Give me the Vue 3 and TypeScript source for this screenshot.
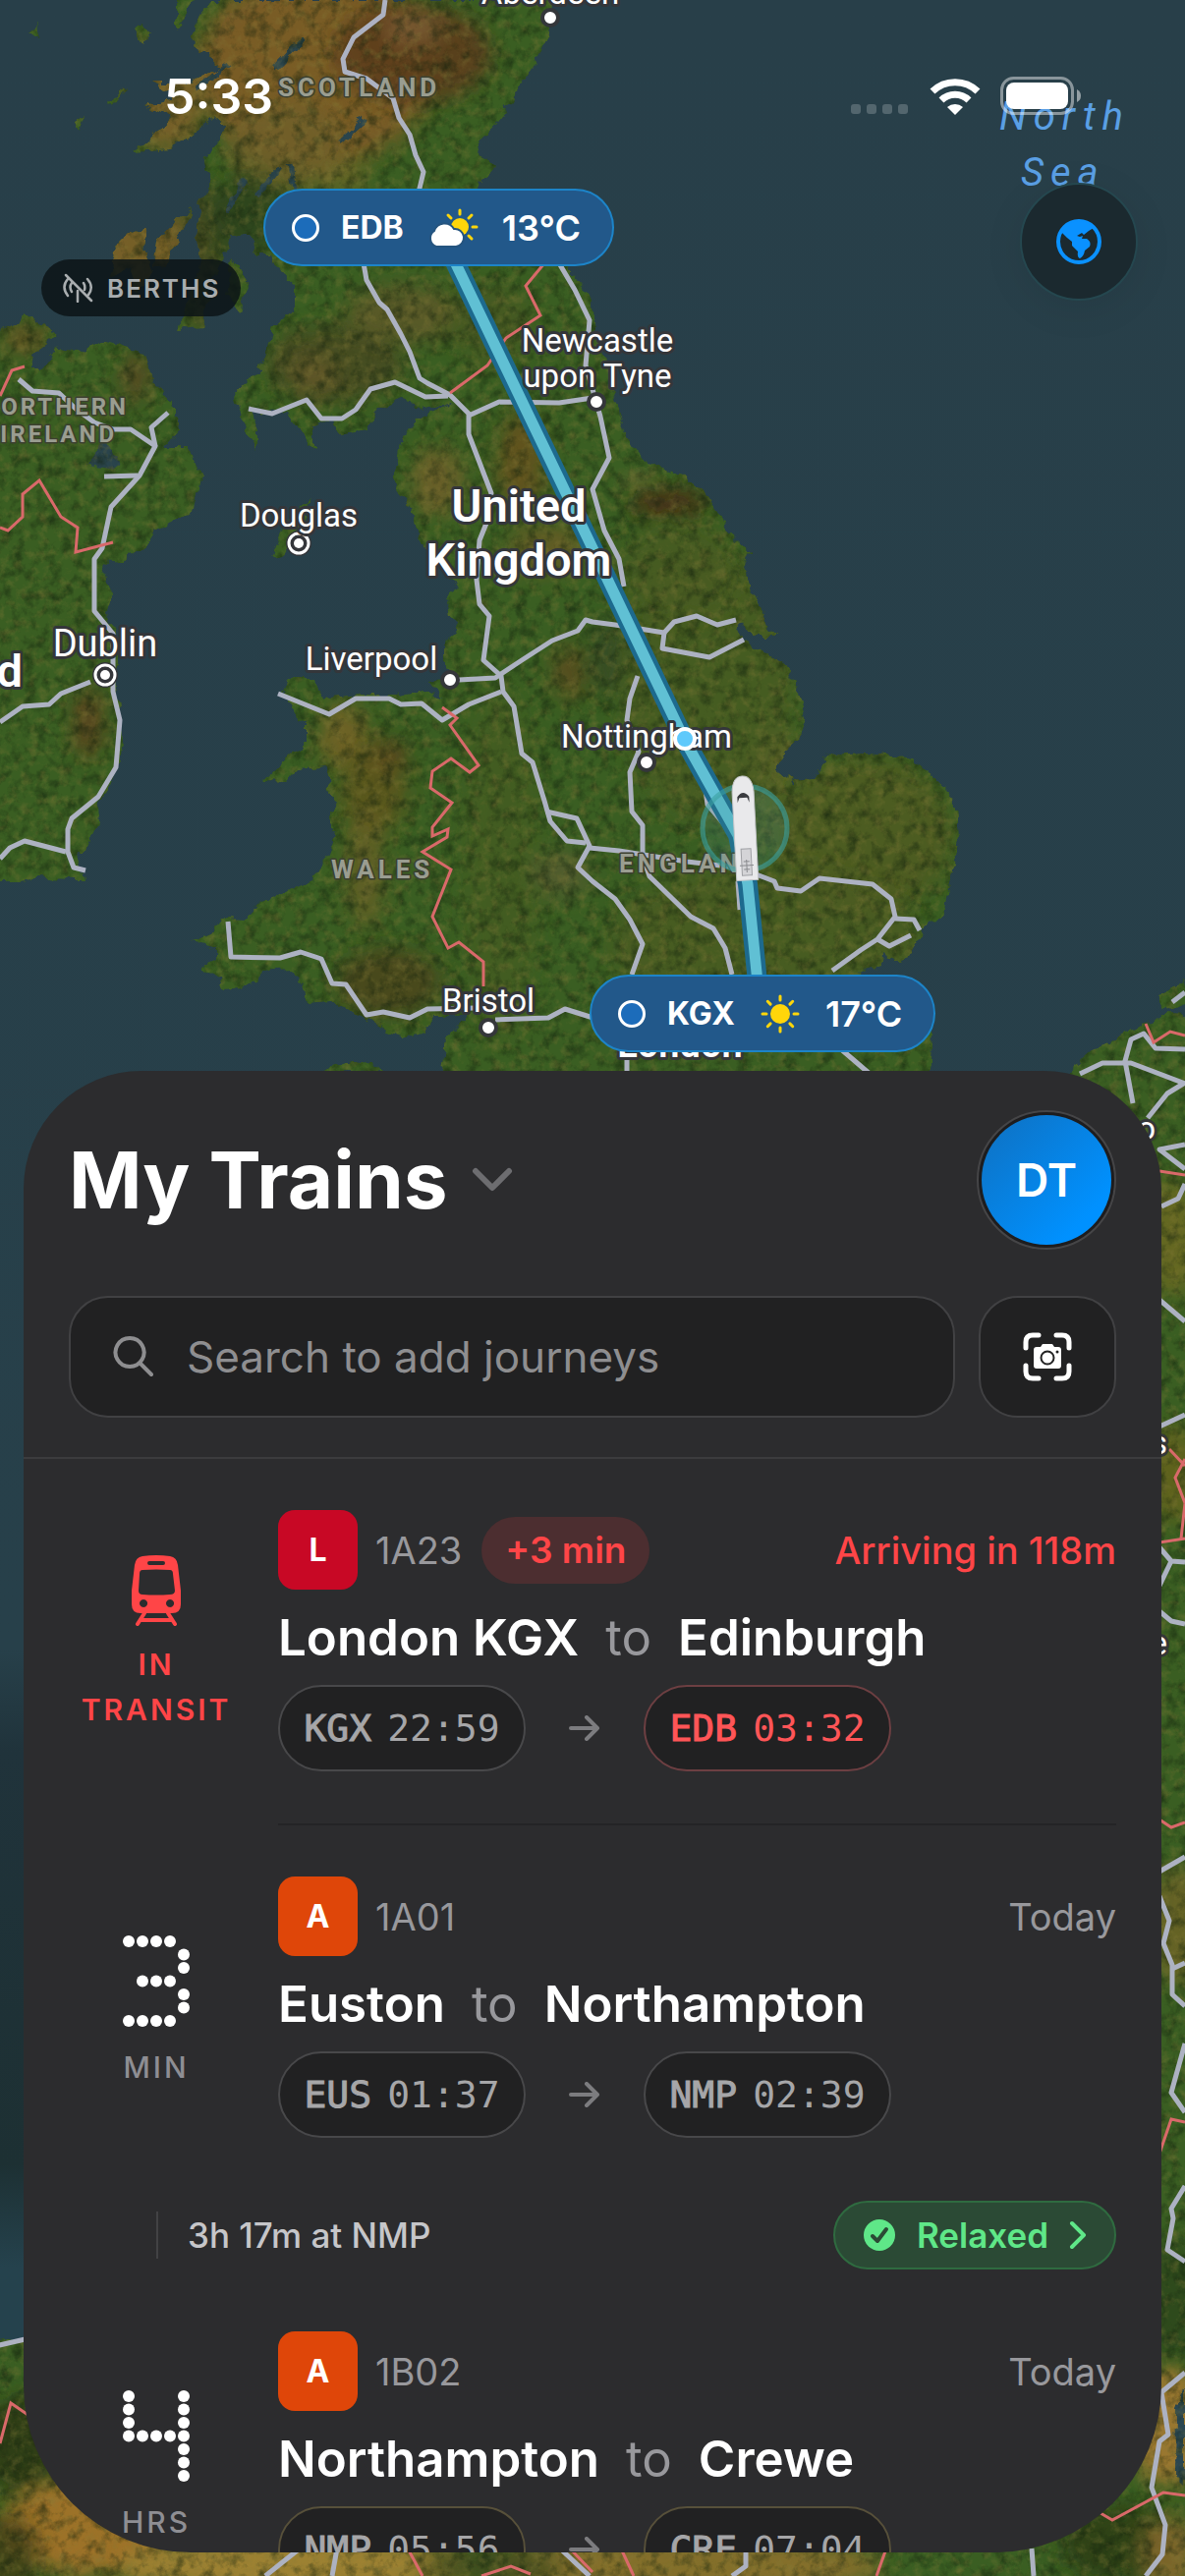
<script setup lang="ts">
interface Stop { code: string; time: string }
interface Journey {
  operator: string
  colour: string
  headcode: string
  delay?: string
  status: string
  late?: boolean
  from: string
  to: string
  depart: Stop
  arrive: Stop
  digit?: string
  unit: string[]
  divider?: boolean
  warm?: boolean
  connection?: { text: string; rating: string }
}
interface Place { name: string; x: number; y: number; kind: string; anchor?: 'start' | 'middle' | 'end' }

const journeys: Journey[] = [
  {
    operator: 'L', colour: '#c80825', headcode: '1A23', delay: '+3 min', status: 'Arriving in 118m', late: true,
    from: 'London KGX', to: 'Edinburgh', depart: { code: 'KGX', time: '22:59' }, arrive: { code: 'EDB', time: '03:32' },
    unit: ['IN', 'TRANSIT'], divider: true,
  },
  {
    operator: 'A', colour: '#df4609', headcode: '1A01', status: 'Today',
    from: 'Euston', to: 'Northampton', depart: { code: 'EUS', time: '01:37' }, arrive: { code: 'NMP', time: '02:39' },
    digit: '3', unit: ['MIN'], connection: { text: '3h 17m at NMP', rating: 'Relaxed' },
  },
  {
    operator: 'A', colour: '#df4609', headcode: '1B02', status: 'Today',
    from: 'Northampton', to: 'Crewe', depart: { code: 'NMP', time: '05:56' }, arrive: { code: 'CRE', time: '07:04' },
    digit: '4', unit: ['HRS'], warm: true,
  },
]

const glyphs: Record<string, string[]> = {
  '3': ['11110', '00001', '00001', '01110', '00001', '00001', '11110'],
  '4': ['10001', '10001', '10001', '11111', '00001', '00001', '00001'],
}

function dots(digit: string): { x: number; y: number }[] {
  const out: { x: number; y: number }[] = []
  glyphs[digit].forEach((row, r) =>
    row.split('').forEach((cell, c) => {
      if (cell === '1') out.push({ x: 6 + c * 14, y: 6 + r * 13.5 })
    }),
  )
  return out
}

const pins = [
  { code: 'EDB', temp: '13°C', sky: 'cloud', left: '268px', top: '192px' },
  { code: 'KGX', temp: '17°C', sky: 'sun', left: '600px', top: '992px' },
]

const rays = [0, 45, 90, 135, 180, 225, 270, 315]

const land = [
  // Great Britain
  'M215,0 200,21 196,46 227,67 192,84 154,84 181,98 146,109 173,119 154,140 135,154 173,151 200,133 219,119 231,130 208,161 215,189 204,205 200,245 205,262 195,300 181,335 205,333 213,290 228,262 233,240 254,238 262,260 277,260 285,277 300,291 300,316 277,333 269,365 254,386 238,403 246,431 262,458 262,438 254,417 292,421 300,435 319,456 319,431 338,424 346,442 373,438 385,417 408,407 435,417 462,410 423,428 408,452 400,491 419,519 427,550 454,576 465,597 456,611 458,629 467,636 454,658 454,679 467,690 438,694 450,711 423,704 404,708 369,708 338,711 327,708 319,690 292,690 288,704 304,733 312,736 312,754 296,769 269,794 292,795 304,783 333,779 335,804 342,815 335,836 342,851 335,869 319,897 304,904 265,919 250,936 227,935 215,951 198,958 219,965 219,979 206,986 223,994 227,1008 262,1001 265,988 296,986 308,1004 310,1022 338,1020 369,1033 388,1047 412,1056 431,1051 442,1033 477,1033 454,1058 450,1090 450,1200 946,1200 946,1090 949,1054 930,1010 872,990 897,983 899,972 918,981 938,951 961,926 966,897 976,854 974,822 965,804 930,772 880,767 841,769 830,795 807,797 790,783 795,769 815,751 820,736 815,708 799,676 757,651 749,633 768,647 790,647 768,611 757,579 763,563 738,540 734,526 718,502 695,484 657,470 638,445 626,403 611,351 600,300 577,272 540,215 480,193 504,172 487,154 485,140 446,154 477,144 500,133 523,98 546,63 558,32 563,0Z',
  // Ireland
  'M-20,340 0,337 19,330 23,317 60,340 31,361 29,375 42,375 58,354 77,358 108,347 146,358 154,386 177,414 181,438 165,456 192,456 204,484 196,523 169,533 154,545 146,558 131,565 123,574 104,572 112,594 113,611 108,626 119,647 119,701 125,754 123,769 112,797 100,822 102,836 87,867 79,867 85,895 35,894 23,897 -20,897Z',
  // Islands
  'M196,210 178,224 160,246 156,270 168,272 180,246Z',
  'M150,230 130,238 118,250 114,282 130,272 140,300 156,276 146,255Z',
  'M236,262 252,290 244,318 230,300Z',
  'M137,30 146,24 153,34 146,44Z M30,32 40,24 38,38Z M126,90 112,106 120,104Z M76,124 86,118 80,134Z',
  'M180,0 200,0 180,30Z',
  'M318,508 290,532 276,568 292,564 304,540Z',
  'M316,1092 340,1084 362,1080 394,1090Z',
  // Continent and south-west
  'M1085,1095 1115,1068 1145,1050 1188,1033 1230,1036 1230,2650 -20,2650 -20,2388 30,2378 300,2300 1150,2300 1150,1140Z',
  'M1177,1014 1192,1004 1206,1000 1210,1020 1190,1030Z',
]

const roads = [
  '392,0 390,15 360,38 349,60 351,73 373,80 400,100 406,120 417,137 423,158 431,175 425,200',
  '369,262 373,285 386,308 394,315 408,340 417,358 427,385 435,390 458,402 477,421 477,442 500,502 496,530 488,550 485,590 488,615 498,627 492,672 510,688 512,704 523,719 531,767 542,776 554,815 560,836 577,856 596,858',
  '556,826 587,833 600,861 588,883 603,897 626,915 641,936 654,961 643,992',
  '253,416 277,421 312,407 327,426 348,426 362,417 377,396 402,389 433,404 456,403',
  '477,423 508,409 569,410 603,405',
  '569,268 585,295 600,326 596,372 607,410 611,424 620,466 603,498 615,540 630,569 635,597',
  '467,692 504,690 531,672 562,652 588,642 596,631 603,633 626,636 676,644 686,633 709,627 730,636 749,631',
  '676,644 674,660 722,669 757,651',
  '283,706 335,727 362,711 396,711 408,717 429,716 450,733 477,717 510,704',
  '649,688 641,711 638,733 650,765 641,786 643,826 654,840 654,872 661,892 703,933 726,945 738,965 745,992',
  '600,863 630,866 699,877 751,883 788,897 791,904 815,907 834,894 888,900 907,915 911,933 893,956 876,967 847,988',
  '911,935 930,936 936,947', '893,956 905,963 927,952',
  '718,804 720,819 747,851', '751,897 753,926',
  '232,938 235,974 285,975 306,969 327,976 338,1001 352,1002 373,1033 390,1030 417,1036 435,1027 484,1026',
  '504,1038 558,1036 575,1027 610,1038', '638,1060 638,1092', '830,1060 856,1068 884,1092',
  '19,386 33,398 60,400 77,416 96,430 115,437 133,437 158,454 142,484 113,516 104,558 96,569 96,622 115,645 115,704 122,733 118,781 100,811 73,833 69,844 69,867 75,883 87,886',
  '158,454 154,435 171,420', '140,484 106,485', '92,694 62,706 50,717 23,719 0,735', '0,874 10,863 25,856 67,867',
  '1099,1093 1122,1082 1151,1082 1206,1103', '1153,1123 1145,1080 1151,1058 1164,1052 1176,1067 1206,1068',
  '1168,1138 1188,1113 1206,1102', '1193,1020 1206,1010', '1206,1165 1180,1170 1206,1190', '1182,1228 1199,1220 1206,1205',
  '1180,1323 1206,1345', '1180,1452 1206,1440', '1180,1575 1192,1589 1206,1590', '1192,1589 1180,1614', '1180,1640 1192,1650 1206,1653',
  '1180,1905 1206,1890', '1180,1930 1190,1955 1184,1978 1193,2000 1193,2030 1206,2042', '1193,2004 1206,1998',
  '1206,2080 1192,2130 1206,2150', '1206,2225 1192,2248 1194,2258 1188,2290 1206,2302',
  '1206,2415 1182,2435 1189,2478 1180,2485 1172,2532 1186,2570 1183,2600 1166,2622',
  '270,2622 305,2594', '338,2622 343,2594', '570,2594 600,2622', '759,2594 759,2612 745,2622', '1050,2594 1052,2622', '-5,2388 30,2380',
]

const borders = [
  '0,403 12,377 25,373',
  '0,537 8,540 23,526 23,503 40,489 62,526 79,537 77,562 115,552',
  '458,400 496,372 515,344 550,321 535,291 554,268',
  '450,720 465,731 458,738 487,779 478,786 459,772 440,785 438,802 460,817 440,842 440,851 456,844 455,852 430,867 459,885 440,933 456,965 467,959 492,979 492,1004',
  '1166,1042 1174,1061 1191,1050 1206,1054', '1180,1192 1206,1196', '1190,1475 1206,1492', '1206,1485 1196,1504 1206,1530 1202,1566',
  '1180,1570 1206,1566', '1180,1852 1192,1860 1206,1855', '1180,2192 1192,2157 1206,2160', '1120,2558 1132,2565 1184,2537 1206,2540',
  '0,2487 11,2446 30,2459', '415,2594 430,2622', '490,2622 520,2612 540,2620', '580,2594 603,2618', '632,2594 645,2622', '902,2594 892,2622',
]

const places: Place[] = [
  { name: 'SCOTLAND', x: 283, y: 98, kind: 'region' },
  { name: 'NORTHERN', x: 131, y: 422, kind: 'region small', anchor: 'end' },
  { name: 'IRELAND', x: 119, y: 450, kind: 'region small', anchor: 'end' },
  { name: 'WALES', x: 337, y: 894, kind: 'region' },
  { name: 'ENGLAND', x: 630, y: 888, kind: 'region' },
  { name: 'Aberdeen', x: 560, y: 4, kind: 'city', anchor: 'middle' },
  { name: 'Newcastle', x: 608, y: 358, kind: 'city', anchor: 'middle' },
  { name: 'upon Tyne', x: 608, y: 394, kind: 'city', anchor: 'middle' },
  { name: 'Douglas', x: 304, y: 536, kind: 'city', anchor: 'middle' },
  { name: 'Liverpool', x: 378, y: 682, kind: 'city', anchor: 'middle' },
  { name: 'Nottingham', x: 658, y: 761, kind: 'city', anchor: 'middle' },
  { name: 'Bristol', x: 497, y: 1030, kind: 'city', anchor: 'middle' },
  { name: 'Dublin', x: 107, y: 668, kind: 'capital', anchor: 'middle' },
  { name: 'London', x: 692, y: 1076, kind: 'capital strong', anchor: 'middle' },
  { name: 'United', x: 528, y: 531, kind: 'country', anchor: 'middle' },
  { name: 'Kingdom', x: 528, y: 586, kind: 'country', anchor: 'middle' },
  { name: 'd', x: 23, y: 699, kind: 'country', anchor: 'end' },
  { name: 'o', x: 1176, y: 1160, kind: 'city', anchor: 'end' },
  { name: 's', x: 1188, y: 1480, kind: 'city', anchor: 'end' },
  { name: 'e', x: 1188, y: 1684, kind: 'city', anchor: 'end' },
]

const towns = [[560, 18], [607, 409], [458, 692], [658, 776], [497, 1046]]
const capitals = [[304, 553], [107, 687]]

const hills = [
  { x: 320, y: 70, rx: 120, ry: 100, c: '#7d5c28', o: 0.95 },
  { x: 420, y: 55, rx: 80, ry: 50, c: '#5d3d1e', o: 0.9 },
  { x: 420, y: 30, rx: 30, ry: 16, c: '#8a6a40', o: 0.6 },
  { x: 290, y: 150, rx: 60, ry: 46, c: '#6f6029', o: 0.8 },
  { x: 350, y: 180, rx: 26, ry: 18, c: '#7a6a2c', o: 0.6 },
  { x: 170, y: 95, rx: 40, ry: 60, c: '#84602a', o: 0.8 },
  { x: 150, y: 255, rx: 50, ry: 50, c: '#85602b', o: 0.8 },
  { x: 205, y: 260, rx: 24, ry: 80, c: '#4c4a20', o: 0.7 },
  { x: 250, y: 220, rx: 40, ry: 40, c: '#2c3c1c', o: 0.7 },
  { x: 340, y: 370, rx: 70, ry: 40, c: '#4a4a20', o: 0.8 },
  { x: 320, y: 380, rx: 24, ry: 20, c: '#6a5a2a', o: 0.7 },
  { x: 410, y: 320, rx: 60, ry: 30, c: '#65582a', o: 0.7 },
  { x: 500, y: 330, rx: 40, ry: 40, c: '#4c5822', o: 0.7 },
  { x: 138, y: 385, rx: 14, ry: 26, c: '#5d4420', o: 0.8 },
  { x: 25, y: 345, rx: 24, ry: 16, c: '#6a4e24', o: 0.7 },
  { x: 445, y: 490, rx: 26, ry: 36, c: '#75602c', o: 0.8 },
  { x: 530, y: 470, rx: 24, ry: 50, c: '#71501f', o: 0.7 },
  { x: 555, y: 560, rx: 40, ry: 26, c: '#7a5c25', o: 0.6 },
  { x: 580, y: 685, rx: 18, ry: 28, c: '#6b451f', o: 0.6 },
  { x: 620, y: 670, rx: 20, ry: 40, c: '#374628', o: 0.7 },
  { x: 680, y: 512, rx: 40, ry: 14, c: '#4a2c16', o: 0.9 },
  { x: 650, y: 488, rx: 16, ry: 6, c: '#8a7240', o: 0.8 },
  { x: 90, y: 735, rx: 16, ry: 36, c: '#60401f', o: 0.8 },
  { x: 350, y: 750, rx: 26, ry: 34, c: '#796428', o: 0.8 },
  { x: 395, y: 770, rx: 20, ry: 20, c: '#5a3c1c', o: 0.7 },
  { x: 380, y: 805, rx: 34, ry: 44, c: '#66541f', o: 0.7 },
  { x: 372, y: 885, rx: 20, ry: 60, c: '#6f6028', o: 0.7 },
  { x: 395, y: 1000, rx: 54, ry: 36, c: '#4c471e', o: 0.9 },
  { x: 790, y: 770, rx: 20, ry: 24, c: '#8a7238', o: 0.7 },
  { x: 770, y: 820, rx: 36, ry: 50, c: '#62662a', o: 0.6 },
  { x: 880, y: 850, rx: 90, ry: 80, c: '#4f5b20', o: 0.9 },
  { x: 720, y: 700, rx: 90, ry: 140, c: '#4a5c20', o: 0.8 },
  { x: 690, y: 580, rx: 60, ry: 50, c: '#4a5c20', o: 0.8 },
  { x: 780, y: 960, rx: 160, ry: 80, c: '#4c5c20', o: 0.8 },
  { x: 510, y: 880, rx: 40, ry: 180, c: '#485d20', o: 0.6 },
  { x: 570, y: 890, rx: 30, ry: 24, c: '#605c34', o: 0.6 },
  { x: 1194, y: 1260, rx: 30, ry: 60, c: '#6f6a22', o: 0.8 },
  { x: 1194, y: 1500, rx: 30, ry: 50, c: '#67631f', o: 0.8 },
  { x: 1200, y: 1960, rx: 30, ry: 60, c: '#6f6426', o: 0.8 },
  { x: 1190, y: 2340, rx: 40, ry: 60, c: '#2f4a1c', o: 0.9 },
  { x: 1190, y: 2470, rx: 40, ry: 60, c: '#a57a32', o: 0.9 },
  { x: 1140, y: 2590, rx: 60, ry: 40, c: '#2f3f18', o: 0.9 },
  { x: 20, y: 2490, rx: 40, ry: 50, c: '#2d3a16', o: 0.9 },
  { x: 90, y: 2570, rx: 90, ry: 50, c: '#a8752c', o: 0.9 },
  { x: 10, y: 2600, rx: 30, ry: 40, c: '#3f3d18', o: 0.8 },
  { x: 300, y: 2612, rx: 180, ry: 30, c: '#a88535', o: 0.9 },
  { x: 700, y: 2612, rx: 200, ry: 30, c: '#97732f', o: 0.8 },
  { x: 500, y: 2612, rx: 70, ry: 20, c: '#3c4a1c', o: 0.8 },
  { x: 1190, y: 2600, rx: 30, ry: 40, c: '#8d6c2d', o: 0.8 },
]
</script>

<template>
  <main class="screen">
    <svg class="map" viewBox="0 0 1206 2622" preserveAspectRatio="xMinYMin slice" role="img" aria-label="Route map">
      <defs>
        <linearGradient id="sea" x1="0" y1="0" x2="0" y2="1">
          <stop offset="0" stop-color="#283f49" />
          <stop offset="0.64" stop-color="#27404a" />
          <stop offset="0.68" stop-color="#20333b" />
          <stop offset="0.84" stop-color="#1d3033" />
          <stop offset="0.88" stop-color="#25424d" />
        </linearGradient>
        <filter id="terrain" x="0" y="0" width="1206" height="2622" filterUnits="userSpaceOnUse" color-interpolation-filters="sRGB">
          <feTurbulence type="fractalNoise" baseFrequency="0.08" numOctaves="3" seed="4" result="edge" />
          <feDisplacementMap in="SourceGraphic" in2="edge" scale="12" xChannelSelector="R" yChannelSelector="G" result="ground" />
          <feTurbulence type="fractalNoise" baseFrequency="0.08" numOctaves="5" seed="9" />
          <feColorMatrix values="0 0 0 0 0.07  0 0 0 0 0.13  0 0 0 0 0.05  1.3 0 0 0 -0.58" />
          <feComposite in2="ground" operator="in" result="shade" />
          <feTurbulence type="fractalNoise" baseFrequency="0.1" numOctaves="4" seed="21" />
          <feColorMatrix values="0 0 0 0 0.52  0 0 0 0 0.48  0 0 0 0 0.22  0 1 0 0 -0.48" />
          <feComposite in2="ground" operator="in" result="light" />
          <feMerge>
            <feMergeNode in="ground" />
            <feMergeNode in="shade" />
            <feMergeNode in="light" />
          </feMerge>
        </filter>
        <filter id="soft" x="-50%" y="-50%" width="200%" height="200%"><feGaussianBlur stdDeviation="10" /></filter>
        <clipPath id="coast"><path v-for="(d, i) in land" :key="i" :d="d" /></clipPath>
      </defs>
      <rect width="1206" height="2622" fill="url(#sea)" />
      <g filter="url(#terrain)">
        <g clip-path="url(#coast)">
          <rect x="-20" width="1246" height="2650" fill="#3a5e22" />
          <ellipse v-for="(h, i) in hills" :key="i" :cx="h.x" :cy="h.y" :rx="h.rx" :ry="h.ry" :fill="h.c" :opacity="h.o" filter="url(#soft)" />
          <path d="M104,448 122,470 118,478 88,474Z" fill="#2a444c" />
          <path d="M1206,2430 1197,2450 1196,2520 1206,2530Z" fill="#2a4650" />
          <path d="M296,165 300,195 M372,120 345,145 M308,40 280,70 M250,185 230,215 M285,170 262,200 M232,66 200,90" stroke="#2a444c" stroke-width="5" fill="none" />
        </g>
      </g>
      <g class="roads">
        <polyline v-for="(p, i) in roads" :key="i" :points="p" />
      </g>
      <g class="borders">
        <polyline v-for="(p, i) in borders" :key="i" :points="p" />
      </g>
      <g class="route">
        <polyline class="casing" points="443,225 603,558 696,752 751,850 761,900 772,1010" />
        <polyline class="line" points="443,225 603,558 696,752 751,850 761,900 772,1010" />
      </g>
      <g class="labels">
        <circle v-for="t in towns" :key="t[0]" :cx="t[0]" :cy="t[1]" r="8" fill="#fff" stroke="#34363a" stroke-width="4" />
        <g v-for="c in capitals" :key="c[0]">
          <circle :cx="c[0]" :cy="c[1]" r="13" fill="#34363a" />
          <circle :cx="c[0]" :cy="c[1]" r="10" fill="none" stroke="#fff" stroke-width="3" />
          <circle :cx="c[0]" :cy="c[1]" r="5" fill="#fff" />
        </g>
        <text v-for="p in places" :key="p.name" :x="p.x" :y="p.y" :class="p.kind" :text-anchor="p.anchor ?? 'start'">{{ p.name }}</text>
        <text class="water" x="1017" y="132">North</text>
        <text class="water" x="1039" y="189">Sea</text>
      </g>
      <circle cx="697" cy="752" r="10" fill="#5fc9fb" stroke="#fff" stroke-width="4" />
      <circle cx="758" cy="843" r="43" fill="#3d8f8e" fill-opacity="0.2" stroke="#3aa0a0" stroke-opacity="0.6" stroke-width="5" />
      <g transform="rotate(-3 758 843)">
        <path d="M747,896 V806 Q748,790 758,790 Q768,790 769,806 V896Z" fill="#e9e9eb" stroke="#c4c5c9" stroke-width="1" />
        <path d="M752,817 V811 Q758,803 764,811 V817 L762,812 H754Z" fill="#3a3b3f" />
        <rect x="753" y="864" width="10" height="27" fill="#d4d4d7" stroke="#9fa0a4" stroke-width="1" />
        <path d="M751,881 H765 M755,877 H761 M755,885 H761 M758,875 V888" stroke="#8a8b8f" stroke-width="1" />
      </g>
    </svg>

    <article v-for="pin in pins" :key="pin.code" class="pin" :style="{ left: pin.left, top: pin.top }">
      <i class="ring"></i>
      <b>{{ pin.code }}</b>
      <svg v-if="pin.sky === 'cloud'" class="sky" viewBox="0 0 52 40" aria-hidden="true">
        <g stroke="#ffd60a" stroke-width="3" stroke-linecap="round">
          <path d="M33,2V6 M21,7L24,10 M45,7L42,10 M50,19H46 M45,31L42,28" />
        </g>
        <circle cx="33" cy="19" r="9" fill="#ffd60a" />
        <path d="M9,39 A9,9 0 0 1 7,23 A11,11 0 0 1 27,21 A9,9 0 0 1 29,39Z" fill="#fff" stroke="#25547f" stroke-width="2" />
      </svg>
      <svg v-else class="sky sun" viewBox="-22 -20 44 40" aria-hidden="true">
        <circle r="10" fill="#ffd60a" />
        <path v-for="a in rays" :key="a" d="M0,-14V-18" :transform="`rotate(${a})`" stroke="#ffd60a" stroke-width="3" stroke-linecap="round" />
      </svg>
      <span>{{ pin.temp }}</span>
    </article>

    <section class="stage">
      <header class="status">
        <time>5:33</time>
        <div class="signals">
          <span class="cell"><i></i><i></i><i></i><i></i></span>
          <svg class="wifi" viewBox="0 0 52 38" aria-hidden="true">
            <path d="M3,14 A33,33 0 0 1 49,14 M12,23 A20,20 0 0 1 40,23" fill="none" stroke="#fff" stroke-width="7" />
            <path d="M26,38 L18,30 A12,12 0 0 1 34,30Z" fill="#fff" />
          </svg>
          <svg class="battery" viewBox="0 0 83 40" aria-hidden="true">
            <rect x="1.5" y="1.5" width="72" height="36" rx="12" fill="none" stroke="#fff" stroke-opacity="0.45" stroke-width="3" />
            <rect x="6" y="6" width="63" height="27" rx="8" fill="#fff" />
            <path d="M78,13 Q82,15 82,19.500 Q82,24 78,26Z" fill="#fff" fill-opacity="0.5" />
          </svg>
        </div>
      </header>
      <div class="controls">
        <button type="button" class="berths">
          <svg viewBox="0 0 32 30" aria-hidden="true">
            <g fill="none" stroke="#a9adaf" stroke-width="2.500" stroke-linecap="round">
              <path d="M4,2 L30,28 M16,18 V29 M6,6 Q-1,14 6,23 M10,10 Q7,14 10,19 M26,6 Q33,14 27,22 M22,10 Q24,13 23,17" />
            </g>
          </svg>
          BERTHS
        </button>
        <button type="button" class="globe" aria-label="Map style">
          <svg viewBox="0 0 46 46" aria-hidden="true">
            <circle cx="23" cy="23" r="21" fill="none" stroke="#0a91ff" stroke-width="4" />
            <path d="M5,13 Q12,2 24,2 Q34,3 38,9 L33,12 L28,16 L26,14 L21,17 L24,18 L27,17 L26,20 L31,20 Q36,23 34,28 L29,32 Q28,38 24,40 Q21,39 22,33 L16,27 L16,23 L11,19Z" fill="#0a91ff" />
          </svg>
        </button>
      </div>
    </section>

    <section class="sheet">
      <header class="head">
        <div class="bar">
          <h1>
            <button type="button" class="title">
              My Trains
              <svg viewBox="0 0 42 26" aria-hidden="true"><path d="M4,4 L21,21 L38,4" fill="none" stroke="#6d6d70" stroke-width="6" stroke-linecap="round" stroke-linejoin="round" /></svg>
            </button>
          </h1>
          <button type="button" class="avatar">DT</button>
        </div>
        <div class="finder">
          <label class="search">
            <svg viewBox="0 0 44 44" aria-hidden="true"><path d="M18,3 a14.500,14.500 0 1 0 0.100,0Z M29,29 L40,40" fill="none" stroke="#8e8e90" stroke-width="4" stroke-linecap="round" /></svg>
            <input type="search" placeholder="Search to add journeys" aria-label="Search to add journeys" />
          </label>
          <button type="button" class="scan" aria-label="Scan ticket">
            <svg viewBox="0 0 50 50" aria-hidden="true">
              <path d="M3,16 V10 Q3,3 10,3 H16 M34,3 H40 Q47,3 47,10 V16 M47,34 V40 Q47,47 40,47 H34 M16,47 H10 Q3,47 3,40 V34" fill="none" stroke="#fff" stroke-width="5" stroke-linecap="round" />
              <path d="M14,15 H18 L20,12 H30 L32,15 H36 Q39,15 39,18 V34 Q39,37 36,37 H14 Q11,37 11,34 V18 Q11,15 14,15Z" fill="#fff" />
              <circle cx="25" cy="26" r="6.500" fill="#fff" stroke="#212122" stroke-width="2" />
              <circle cx="35" cy="20" r="1.500" fill="#212122" />
            </svg>
          </button>
        </div>
      </header>

      <ul class="journeys">
        <template v-for="j in journeys" :key="j.headcode">
          <li class="journey">
            <div class="countdown" :class="{ late: j.late }">
              <svg v-if="j.digit" class="digit" viewBox="0 0 68 93" role="img" :aria-label="j.digit">
                <circle v-for="(d, i) in dots(j.digit)" :key="i" :cx="d.x" :cy="d.y" r="6" fill="#fff" />
              </svg>
              <svg v-else class="train" viewBox="0 0 52 72" aria-hidden="true">
                <path fill-rule="evenodd" fill="#ff4547" d="M12,1 Q26,-1 40,1 Q47,2 48,10 L51,36 V50 Q51,59 42,59 H10 Q1,59 1,50 V36 L4,10 Q5,2 12,1Z M19,6 a2,2 0 0 0 0,4 H33 a2,2 0 0 0 0,-4Z M12,15 Q9,15 9,19 L8,36 Q8,40 12,40 Q26,41 40,40 Q45,40 45,36 L43,19 Q43,15 40,15 Q26,14 12,15Z M13,45 a4,4 0 1 0 0.100,0Z M40,45 a4,4 0 1 0 0.100,0Z" />
                <path d="M14,59 L7,70 M38,59 L45,70 M11,66 H41" fill="none" stroke="#ff4547" stroke-width="4" stroke-linecap="round" />
              </svg>
              <p><span v-for="u in j.unit" :key="u">{{ u }}</span></p>
            </div>
            <div class="details" :class="{ divided: j.divider }">
              <div class="meta">
                <span class="operator" :style="{ background: j.colour }">{{ j.operator }}</span>
                <span class="headcode">{{ j.headcode }}</span>
                <span v-if="j.delay" class="delay">{{ j.delay }}</span>
                <span class="when" :class="{ late: j.late }">{{ j.status }}</span>
              </div>
              <h2>{{ j.from }}<small>to</small>{{ j.to }}</h2>
              <div class="times">
                <span class="stop" :class="{ warm: j.warm }"><b>{{ j.depart.code }}</b>{{ j.depart.time }}</span>
                <svg viewBox="0 0 32 26" aria-hidden="true"><path d="M2,13 H29 M18,2 L29,13 L18,24" fill="none" stroke="#7c7c7f" stroke-width="4" stroke-linecap="round" stroke-linejoin="round" /></svg>
                <span class="stop" :class="{ late: j.late, warm: j.warm }"><b>{{ j.arrive.code }}</b>{{ j.arrive.time }}</span>
              </div>
            </div>
          </li>
          <li v-if="j.connection" class="connection">
            <span class="wait">{{ j.connection.text }}</span>
            <button type="button" class="rating">
              <svg class="tick" viewBox="0 0 34 34" aria-hidden="true"><circle cx="17" cy="17" r="16" fill="#5fe788" /><path d="M10,18 L15,23 L24,11" fill="none" stroke="#2b4a35" stroke-width="4" stroke-linecap="round" stroke-linejoin="round" /></svg>
              {{ j.connection.rating }}
              <svg class="go" viewBox="0 0 18 30" aria-hidden="true"><path d="M3,3 L15,15 L3,27" fill="none" stroke="#5fe788" stroke-width="4" stroke-linecap="round" stroke-linejoin="round" /></svg>
            </button>
          </li>
        </template>
      </ul>
    </section>
  </main>
</template>

<style>
body {
  background: #27404a;
}
</style>

<style scoped>
.screen {
  position: relative;
  display: flex;
  flex-direction: column;
  box-sizing: border-box;
  height: 100vh;
  padding-bottom: 24px;
  overflow: hidden;
  font-family: Inter, "Liberation Sans", sans-serif;
  color: #fff;
}
.screen * {
  box-sizing: border-box;
}
button {
  margin: 0;
  padding: 0;
  border: 0;
  background: none;
  color: inherit;
  font: inherit;
}
.map {
  position: absolute;
  inset: 0;
  width: 100%;
  height: 100%;
}
.roads polyline {
  fill: none;
  stroke: #adb2c2;
  stroke-width: 5;
  stroke-linejoin: round;
}
.borders polyline {
  fill: none;
  stroke: #d9696a;
  stroke-width: 3;
}
.route polyline {
  fill: none;
  stroke-linejoin: round;
}
.route .casing {
  stroke: #1d6a8e;
  stroke-width: 20;
}
.route .line {
  stroke: #60c0d4;
  stroke-width: 11;
}
.labels text {
  font-family: Roboto, "Liberation Sans", sans-serif;
  fill: #fff;
  stroke: #34363a;
  stroke-width: 6px;
  stroke-linejoin: round;
  paint-order: stroke;
}
.labels .city {
  font-size: 33px;
}
.labels .capital {
  font-size: 38px;
}
.labels .strong {
  font-weight: 600;
}
.labels .country {
  font-size: 47px;
  font-weight: 600;
}
.labels .region {
  font-size: 26px;
  font-weight: 700;
  letter-spacing: 4px;
  fill: #9a9d90;
  stroke: #3c4030;
  stroke-width: 3px;
}
.labels .small {
  font-size: 24px;
  letter-spacing: 3px;
}
.labels .water {
  font-size: 40px;
  font-style: italic;
  letter-spacing: 7px;
  fill: #5a9fe4;
  stroke: none;
}

.pin {
  position: absolute;
  display: flex;
  align-items: center;
  height: 79px;
  padding: 0 32px 0 27px;
  border: 2px solid #1d84c8;
  border-radius: 40px;
  background: #22588a;
  font-size: 36px;
  font-weight: 600;
}
.ring {
  width: 28px;
  height: 28px;
  margin-right: 22px;
  border: 3px solid #fff;
  border-radius: 50%;
  background: #1c6cba;
}
.pin b {
  font-size: 32px;
  font-weight: 700;
}
.sky {
  width: 52px;
  height: 40px;
  margin: 0 24px;
}
.sun {
  width: 44px;
}

.stage {
  position: relative;
  flex: 0 0 1090px;
}
.status {
  display: flex;
  align-items: center;
  justify-content: space-between;
  height: 186px;
  padding: 10px 105px 0 167px;
  font-size: 50px;
  font-weight: 600;
}
.signals {
  display: flex;
  align-items: center;
}
.cell {
  display: flex;
  gap: 6px;
  margin: 26px 22px 0 0;
}
.cell i {
  width: 10px;
  height: 10px;
  border-radius: 3px;
  background: #53666e;
}
.wifi {
  width: 52px;
  height: 38px;
  margin-right: 20px;
}
.battery {
  width: 83px;
  height: 40px;
}
.controls {
  display: flex;
  align-items: flex-start;
  justify-content: space-between;
  padding: 0 48px 0 42px;
}
.berths {
  display: flex;
  align-items: center;
  gap: 14px;
  height: 58px;
  margin-top: 78px;
  padding: 0 21px;
  border-radius: 29px;
  background: rgba(12, 20, 22, 0.85);
  color: #a9adaf;
  font-size: 26px;
  font-weight: 600;
  letter-spacing: 2px;
}
.berths svg {
  width: 32px;
  height: 30px;
}
.globe {
  display: grid;
  place-items: center;
  width: 120px;
  height: 120px;
  border: 2px solid #25474f;
  border-radius: 50%;
  background: #1b292f;
  box-shadow: 0 8px 40px rgba(0, 0, 0, 0.08);
}
.globe svg {
  width: 46px;
  height: 46px;
}

.sheet {
  position: relative;
  flex: 1 1 0;
  min-height: 0;
  margin: 0 24px;
  overflow: hidden;
  border-radius: 120px 120px 170px 170px;
  background: #2c2c2e;
}
.head {
  padding: 40px 46px;
  border-bottom: 2px solid #3c3c3e;
}
.bar {
  display: flex;
  align-items: center;
  justify-content: space-between;
  height: 142px;
}
h1,
h2,
p {
  margin: 0;
}
.title {
  display: flex;
  align-items: center;
  gap: 24px;
  font-size: 80px;
  font-weight: 700;
  line-height: 96px;
}
.title svg {
  width: 42px;
  height: 26px;
}
.avatar {
  width: 142px;
  height: 142px;
  border: 2px solid #454547;
  border-radius: 50%;
  background: linear-gradient(135deg, #0f70c0, #0091ff 80%) content-box, #1d1d1f;
  background-clip: content-box, border-box;
  padding: 3px;
  font-size: 46px;
  font-weight: 600;
}
.finder {
  display: flex;
  gap: 24px;
  margin-top: 47px;
}
.search {
  display: flex;
  flex: 1;
  align-items: center;
  gap: 32px;
  height: 124px;
  padding: 0 42px;
  border: 2px solid #414143;
  border-radius: 40px;
  background: #212122;
}
.search svg {
  flex: none;
  width: 44px;
  height: 44px;
}
.search input {
  flex: 1;
  min-width: 0;
  padding: 0;
  border: 0;
  outline: 0;
  background: none;
  color: #fff;
  font: inherit;
  font-size: 44px;
}
.search input::placeholder {
  color: #8e8e90;
  opacity: 1;
}
.scan {
  display: grid;
  place-items: center;
  width: 140px;
  height: 124px;
  border: 2px solid #414143;
  border-radius: 40px;
  background: #212122;
}
.scan svg {
  width: 50px;
  height: 50px;
}

.journeys {
  margin: 0;
  padding: 0 46px;
  list-style: none;
}
.journey {
  display: flex;
  gap: 35px;
}
.countdown {
  display: flex;
  flex: none;
  flex-direction: column;
  align-items: center;
  justify-content: center;
  gap: 18px;
  width: 178px;
  padding-top: 10px;
  color: #8e8e93;
  font-size: 30px;
  font-weight: 500;
  letter-spacing: 3px;
  line-height: 46px;
  text-align: center;
}
.countdown.late {
  gap: 16px;
  padding-top: 2px;
  color: #ff4547;
  font-weight: 600;
}
.countdown p span {
  display: block;
}
.digit {
  width: 68px;
  height: 93px;
}
.train {
  width: 52px;
  height: 72px;
}
.details {
  display: flex;
  flex: 1;
  flex-direction: column;
  gap: 16px;
  padding: 52px 0 53px;
}
.divided {
  border-bottom: 2px solid #242426;
}
.meta {
  display: flex;
  align-items: center;
  height: 81px;
  font-size: 38px;
  color: #98989c;
}
.operator {
  display: grid;
  place-items: center;
  width: 81px;
  height: 81px;
  margin-right: 18px;
  border-radius: 17px;
  color: #fff;
  font-size: 32px;
  font-weight: 700;
}
.delay {
  height: 68px;
  margin-left: 20px;
  padding: 0 24px;
  border-radius: 34px;
  background: #4c2e30;
  color: #ff4547;
  font-size: 37px;
  font-weight: 600;
  line-height: 68px;
}
.when {
  margin-left: auto;
}
.when.late {
  color: #ff4547;
  font-weight: 500;
}
h2 {
  font-size: 51px;
  font-weight: 600;
  line-height: 65px;
}
h2 small {
  margin: 0 27px;
  color: #98989c;
  font-size: inherit;
  font-weight: 400;
}
.times {
  display: flex;
  align-items: center;
  gap: 44px;
}
.times svg {
  width: 32px;
  height: 26px;
}
.stop {
  display: flex;
  align-items: center;
  justify-content: center;
  gap: 16px;
  width: 252px;
  height: 88px;
  border: 2px solid #48484a;
  border-radius: 44px;
  background: #212122;
  color: #a6a6a8;
  font-family: "DejaVu Sans Mono", monospace;
  font-size: 38px;
}
.stop b {
  font-weight: 400;
  -webkit-text-stroke: 1px currentColor;
}
.stop.late {
  border-color: #6d3f42;
  color: #ff5557;
}
.stop.warm {
  border-color: #57503a;
}

.connection {
  display: flex;
  align-items: center;
  justify-content: space-between;
  padding: 11px 0 11px 89px;
}
.wait {
  height: 48px;
  padding-left: 30px;
  border-left: 2px solid #424244;
  color: #c6c6c9;
  font-size: 35px;
  font-weight: 500;
  line-height: 48px;
}
.rating {
  display: flex;
  align-items: center;
  gap: 21px;
  height: 70px;
  padding: 0 28px;
  border: 2px solid #2f6b40;
  border-radius: 35px;
  background: #2b4a35;
  color: #5fe788;
  font-size: 35px;
  font-weight: 600;
}
.tick {
  width: 34px;
  height: 34px;
}
.go {
  width: 18px;
  height: 30px;
}
</style>
